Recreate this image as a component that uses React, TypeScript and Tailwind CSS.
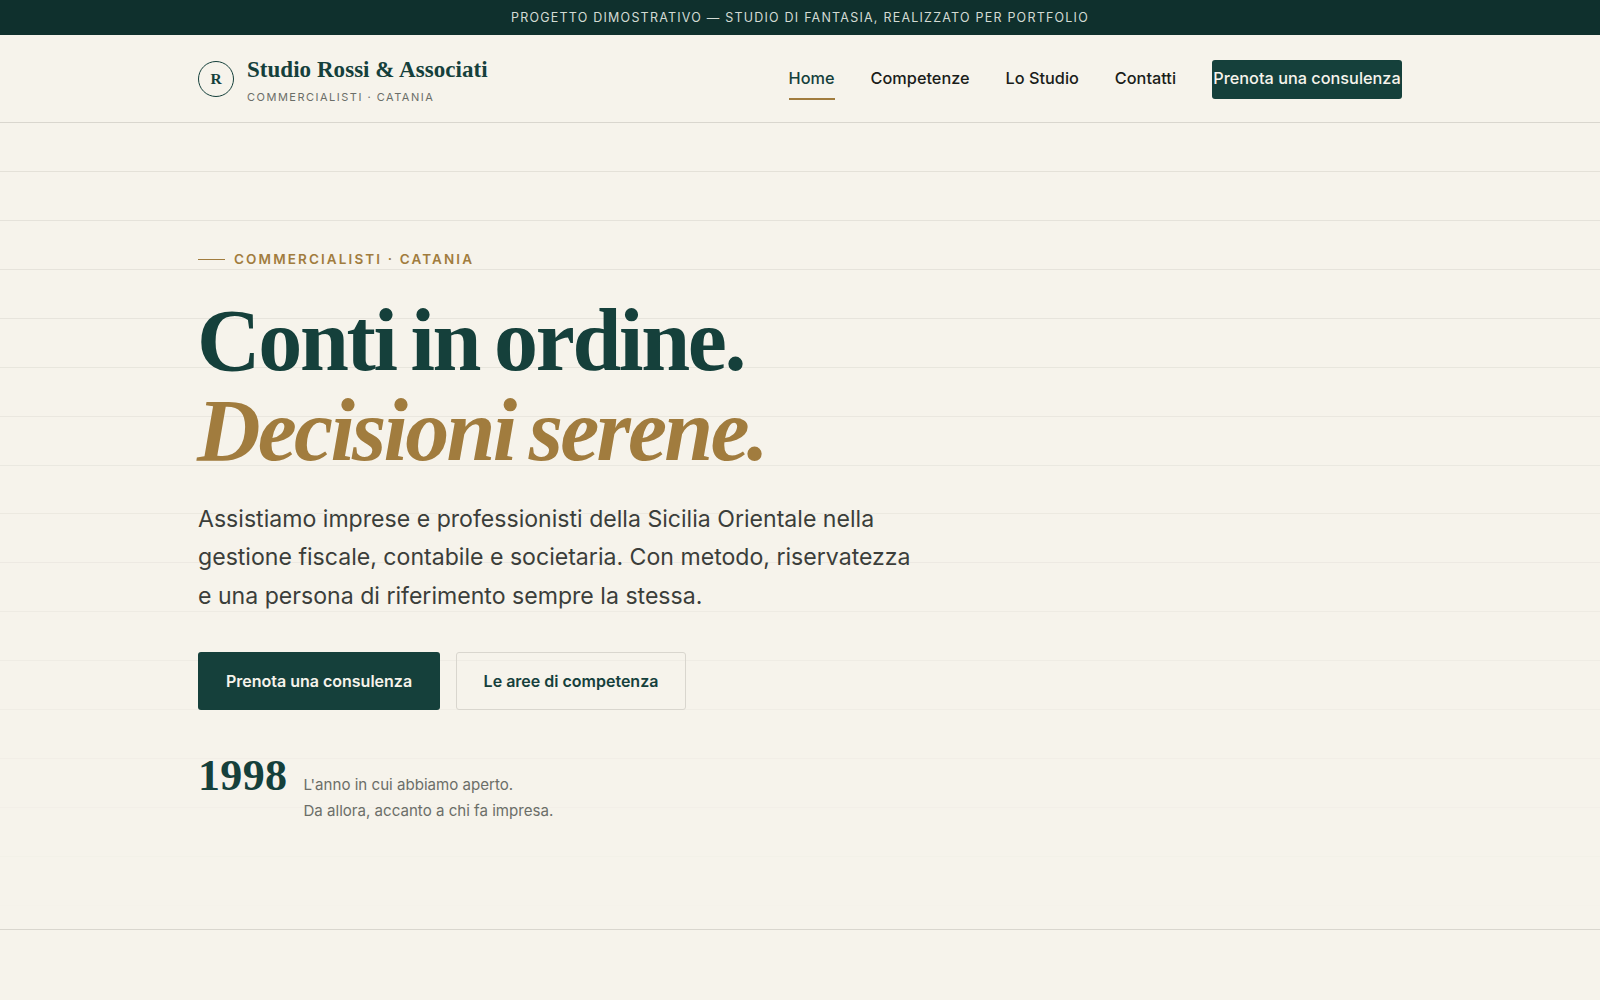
const navItems = [
    { label: "Home", active: true },
    { label: "Competenze", active: false },
    { label: "Lo Studio", active: false },
    { label: "Contatti", active: false },
];

export default function App() {
    return (
        <div className="min-h-screen bg-[#f6f3eb] font-['Inter',sans-serif] text-[#1a1d1a] overflow-hidden">
            {/* Notice bar */}
            <div className="h-[35px] pt-px bg-[#0f302d] flex items-center justify-center text-[12.5px] tracking-[1.22px] text-[#d3dbd4]">
                PROGETTO DIMOSTRATIVO — STUDIO DI FANTASIA, REALIZZATO PER PORTFOLIO
            </div>

            <Header />
            <Hero />
        </div>
    );
}

function Header() {
    return (
        <header className="h-[88px] border-b border-[#d9d6ce]">
            <div className="w-[1204px] mx-auto h-full flex items-center justify-between">
                <a href="#" className="flex items-center gap-[13px]">
                    <span className="size-9 rounded-full border border-[#15403b] flex items-center justify-center font-['Liberation_Serif',serif] font-bold text-[15.5px] text-[#15403b]">
                        R
                    </span>
                    <span className="flex flex-col pt-[5px]">
                        <span className="font-['Liberation_Serif',serif] font-bold text-[23px] leading-7 tracking-[0.04px] text-[#15403b]">
                            Studio Rossi &amp; Associati
                        </span>
                        <span className="mt-1 text-[11px] leading-[18px] tracking-[1.5px] text-[#6b6e68]">
                            COMMERCIALISTI · CATANIA
                        </span>
                    </span>
                </a>

                <nav className="pt-[2px] flex items-center gap-9 text-[16.3px] font-medium">
                    {navItems.map((item) => (
                        <NavLink key={item.label} label={item.label} active={item.active} />
                    ))}
                    <a
                        href="#"
                        className="w-[190px] h-[39px] pb-[2px] rounded-[3px] bg-[#15403b] text-[#f6f3eb] flex items-center justify-center whitespace-nowrap"
                    >
                        Prenota una consulenza
                    </a>
                </nav>
            </div>
        </header>
    );
}

function NavLink({ label, active }: { label: string; active: boolean }) {
    return (
        <a
            href="#"
            className={
                active
                    ? "h-[41px] pb-[2px] flex items-center border-y-2 border-t-transparent border-b-[#a17c3e] text-[#15403b]"
                    : "h-[41px] pb-[2px] flex items-center"
            }
        >
            {label}
        </a>
    );
}

function Hero() {
    return (
        <section className="relative h-[807px] border-b border-[#d9d6ce]">
            {/* Ledger lines, fading towards the bottom */}
            <div className="absolute inset-0 bg-[repeating-linear-gradient(to_bottom,transparent_0px,transparent_47.93px,#e2dfd7_47.93px,#e2dfd7_48.93px)] [mask-image:linear-gradient(to_bottom,black,transparent)]" />

            <div className="relative w-[1204px] mx-auto pt-[124px]">
                <div className="flex items-center gap-[9px] h-6 text-[13.5px] font-semibold tracking-[2.12px] text-[#a17c3e]">
                    <span className="w-[27px] h-px bg-[#a17c3e]" />
                    COMMERCIALISTI · CATANIA
                </div>

                <h1 className="mt-[25px] -ml-px font-['Liberation_Serif',serif] font-bold text-[88px] leading-[90px] tracking-[-2.3px] [word-spacing:-5px] text-[#15403b]">
                    Conti in ordine.
                    <br />
                    <em className="tracking-[-2.75px] text-[#a17c3e]">Decisioni serene.</em>
                </h1>

                <p className="mt-[24px] text-[23.1px] leading-[38.4px] text-[#3b3e3a]">
                    Assistiamo imprese e professionisti della Sicilia Orientale nella
                    <br />
                    gestione fiscale, contabile e societaria. Con metodo, riservatezza
                    <br />
                    e una persona di riferimento sempre la stessa.
                </p>

                <div className="mt-[37px] flex gap-4 text-[16px] font-semibold">
                    <a
                        href="#"
                        className="w-[242px] h-[58px] rounded-[3px] bg-[#15403b] text-[#f6f3eb] flex items-center justify-center"
                    >
                        Prenota una consulenza
                    </a>
                    <a
                        href="#"
                        className="w-[230px] h-[58px] rounded-[3px] border border-[#d9d6ce] text-[#15403b] flex items-center justify-center"
                    >
                        Le aree di competenza
                    </a>
                </div>

                <div className="mt-[38px] flex items-baseline gap-4">
                    <span className="font-['Liberation_Serif',serif] font-bold text-[44px] leading-[56px] tracking-[0.35px] text-[#15403b]">
                        1998
                    </span>
                    <p className="text-[15.1px] leading-[25.6px] text-[#6b6e68]">
                        L'anno in cui abbiamo aperto.
                        <br />
                        Da allora, accanto a chi fa impresa.
                    </p>
                </div>
            </div>
        </section>
    );
}
